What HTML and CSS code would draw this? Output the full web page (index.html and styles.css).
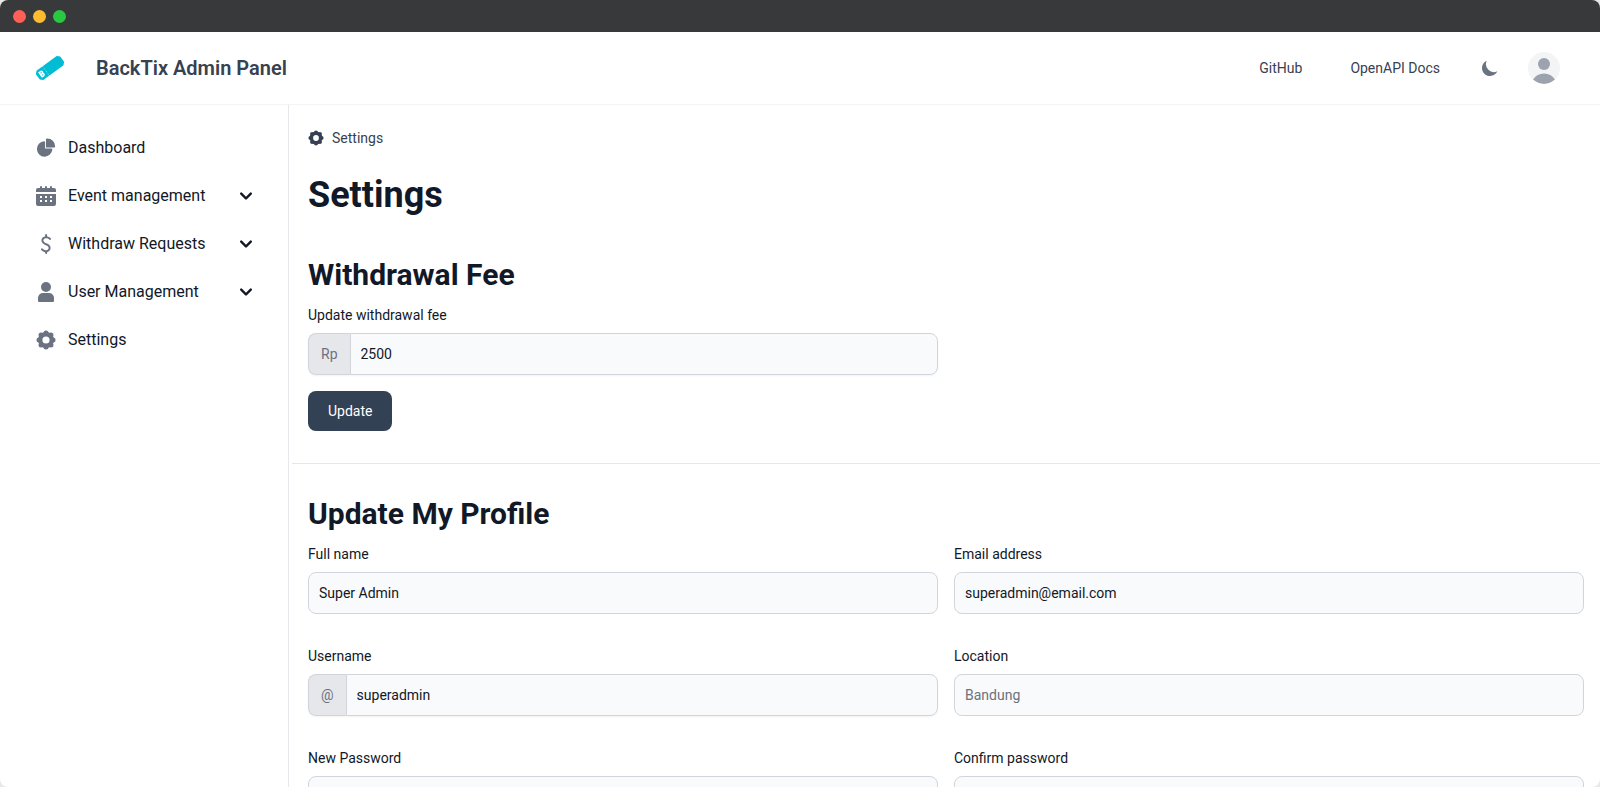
FILE: index.html
```html
<!DOCTYPE html>
<html lang="en">
<head>
<meta charset="utf-8">
<meta name="viewport" content="width=device-width, initial-scale=1">
<title>BackTix Admin Panel</title>
<link rel="stylesheet" href="styles.css">
</head>
<body>
<svg class="defs" aria-hidden="true">
  <symbol id="cog" viewBox="0 0 20 20">
    <circle cx="10" cy="10" r="5.800" fill="none" stroke="currentColor" stroke-width="4.400"/>
    <path fill="none" stroke="currentColor" stroke-width="5" stroke-linecap="round" d="M10 3h0M10 17h0M3 10h0M17 10h0M5.050 5.050h0M14.950 5.050h0M5.050 14.950h0M14.950 14.950h0"/>
  </symbol>
  <symbol id="chevron" viewBox="0 0 20 20"><path fill-rule="evenodd" d="M5.293 7.293a1 1 0 0 1 1.414 0L10 10.586l3.293-3.293a1 1 0 1 1 1.414 1.414l-4 4a1 1 0 0 1-1.414 0l-4-4a1 1 0 0 1 0-1.414z"/></symbol>
</svg>
<div class="window">
  <div class="titlebar">
    <span class="dot dot-red"></span>
    <span class="dot dot-yellow"></span>
    <span class="dot dot-green"></span>
  </div>

  <header class="topbar">
    <a class="brand" href="#">
      <svg class="logo" viewBox="0 0 28 24" aria-hidden="true">
        <g transform="rotate(-36 14 12)">
          <path fill="#00bcd4" d="M1.500 6.200h25l2.500 2.500v6.600l-2.500 2.500h-25L-1 15.300V8.700z"/>
          <path d="M9 6.200v11.600" stroke="#fff" stroke-width=".6" stroke-dasharray="1 1" fill="none" opacity=".8"/>
          <path d="M2.500 9.500v5h2a1.300 1.300 0 0 0 0-2.500h-2 1.800a1.200 1.200 0 0 0 0-2.500z" fill="none" stroke="#fff" stroke-width="1.500"/>
        </g>
      </svg>
      <span class="brand-name">BackTix Admin Panel</span>
    </a>
    <nav class="toplinks" aria-label="Resources">
      <a href="#">GitHub</a>
      <a href="#">OpenAPI Docs</a>
    </nav>
    <button class="icon-button theme" type="button" aria-label="Toggle dark mode">
      <svg viewBox="0 0 20 20"><path d="M17.293 13.293A8 8 0 0 1 6.707 2.707a8.001 8.001 0 1 0 10.586 10.586z"/></svg>
    </button>
    <button class="icon-button avatar" type="button" aria-label="Account">
      <svg viewBox="0 0 32 32"><circle cx="16" cy="12" r="6"/><path d="M5 27.500a13 13 0 0 1 22 0A16 16 0 0 1 5 27.500z"/></svg>
    </button>
  </header>

  <div class="body">
    <nav class="sidebar" aria-label="Main">
      <a class="item" href="#">
        <svg class="item-icon" viewBox="0 0 22 21"><path d="M16.975 11H10V4.025a1 1 0 0 0-1.066-.998 8.500 8.500 0 1 0 9.039 9.039.999.999 0 0 0-1-1.066h.002Z"/><path d="M12.500 0c-.157 0-.311.010-.565.027A1 1 0 0 0 11 1.020V10h8.975a1 1 0 0 0 1-.935c.013-.188.028-.374.028-.565A8.510 8.510 0 0 0 12.500 0Z"/></svg>
        <span>Dashboard</span>
      </a>
      <button class="item" type="button">
        <svg class="item-icon" viewBox="0 0 20 20"><path d="M18 2h-2V1a1 1 0 0 0-2 0v1h-3V1a1 1 0 0 0-2 0v1H6V1a1 1 0 0 0-2 0v1H2a2 2 0 0 0-2 2v2h20V4a2 2 0 0 0-2-2Z"/><path fill-rule="evenodd" d="M0 18a2 2 0 0 0 2 2h16a2 2 0 0 0 2-2V8H0v10ZM4 10h2v2H4zm5 0h2v2H9zm5 0h2v2h-2zM4 14h2v2H4zm5 0h2v2H9zm5 0h2v2h-2z"/></svg>
        <span>Event management</span>
        <svg class="chevron"><use href="#chevron"/></svg>
      </button>
      <button class="item" type="button">
        <svg class="item-icon item-icon-line" viewBox="2 2 20 20"><path d="M8 17.345a4.760 4.760 0 0 0 2.558 1.618c2.274.589 4.512-.446 4.999-2.310.487-1.866-1.273-3.900-3.546-4.490-2.273-.590-4.034-2.623-3.547-4.488.486-1.865 2.724-2.899 4.998-2.310.982.236 1.870.793 2.538 1.592m-3.879 12.171V21m0-18v2.200"/></svg>
        <span>Withdraw Requests</span>
        <svg class="chevron"><use href="#chevron"/></svg>
      </button>
      <button class="item" type="button">
        <svg class="item-icon" viewBox="0 0 20 20"><circle cx="10" cy="5" r="5"/><path d="M7 11h6a5 5 0 0 1 5 5v3a1 1 0 0 1-1 1H3a1 1 0 0 1-1-1v-3a5 5 0 0 1 5-5z"/></svg>
        <span>User Management</span>
        <svg class="chevron"><use href="#chevron"/></svg>
      </button>
      <a class="item" href="#">
        <svg class="item-icon"><use href="#cog"/></svg>
        <span>Settings</span>
      </a>
    </nav>

    <main class="content">
      <section class="section intro">
        <nav class="breadcrumb" aria-label="Breadcrumb">
          <svg><use href="#cog"/></svg>
          <a href="#">Settings</a>
        </nav>
        <h1>Settings</h1>
        <form class="form">
          <h2>Withdrawal Fee</h2>
          <div class="grid">
            <div class="field">
              <label for="fee">Update withdrawal fee</label>
              <div class="group">
                <span class="addon">Rp</span>
                <input id="fee" type="text" value="2500">
              </div>
            </div>
          </div>
          <button class="primary" type="button">Update</button>
        </form>
      </section>

      <section class="section">
        <form class="form">
          <h2>Update My Profile</h2>
          <div class="grid">
            <div class="field">
              <label for="name">Full name</label>
              <input id="name" type="text" value="Super Admin">
            </div>
            <div class="field">
              <label for="email">Email address</label>
              <input id="email" type="email" value="superadmin@email.com">
            </div>
            <div class="field">
              <label for="username">Username</label>
              <div class="group">
                <span class="addon">@</span>
                <input id="username" type="text" value="superadmin">
              </div>
            </div>
            <div class="field">
              <label for="location">Location</label>
              <input id="location" type="text" placeholder="Bandung">
            </div>
            <div class="field">
              <label for="password">New Password</label>
              <input id="password" type="password">
            </div>
            <div class="field">
              <label for="confirm">Confirm password</label>
              <input id="confirm" type="password">
            </div>
          </div>
        </form>
      </section>
    </main>
  </div>
</div>
</body>
</html>
```
FILE: styles.css
```css
*, *::before, *::after {
  box-sizing: border-box;
}

body {
  margin: 0;
  background: #e8e8e8;
  color: #111827;
  font-family: Roboto, "Liberation Sans", sans-serif;
  font-size: 14px;
  line-height: 20px;
}

a {
  color: inherit;
  text-decoration: none;
}

button,
input {
  font: inherit;
  color: inherit;
}

button {
  border: 0;
  background: none;
  cursor: pointer;
}

svg {
  fill: currentColor;
}

.defs {
  position: absolute;
  width: 0;
  height: 0;
}

.window {
  display: flex;
  flex-direction: column;
  height: 100vh;
  overflow: hidden;
  border-radius: 8px;
  background: #fff;
}

.titlebar {
  display: flex;
  flex: none;
  align-items: center;
  gap: 7px;
  height: 32px;
  padding: 1px 13px 0;
  background: #38393a;
}

.dot {
  width: 13px;
  height: 13px;
  border-radius: 50%;
}

.dot-red { background: #ff5f57; }
.dot-yellow { background: #febc2e; }
.dot-green { background: #28c840; }

.topbar {
  display: flex;
  flex: none;
  align-items: center;
  height: 73px;
  padding: 0 40px 0 36px;
  border-bottom: 1px solid #f3f4f6;
  color: #374151;
}

.brand {
  display: flex;
  flex: 1;
  align-items: center;
  gap: 32px;
}

.logo {
  width: 28px;
  height: 24px;
  overflow: visible;
}

.brand-name {
  font-size: 20px;
  font-weight: 600;
  line-height: 28px;
}

.toplinks {
  display: flex;
  gap: 48px;
}

.icon-button {
  display: flex;
  padding: 0;
}

.theme {
  margin: 0 28px 0 40px;
  color: #6b7280;
}

.theme svg {
  width: 20px;
  height: 20px;
}

.avatar {
  overflow: hidden;
  border-radius: 50%;
  background: #f3f4f6;
  color: #9ca3af;
}

.avatar svg {
  width: 32px;
  height: 32px;
}

.body {
  display: flex;
  flex: 1;
  min-height: 0;
}

.sidebar {
  display: flex;
  flex: none;
  flex-direction: column;
  gap: 8px;
  width: 289px;
  padding: 23px 24px 16px;
  border-right: 1px solid #e5e7eb;
}

.item {
  display: flex;
  align-items: center;
  gap: 12px;
  height: 40px;
  padding: 0 12px;
  font-size: 16px;
  line-height: 24px;
  text-align: left;
}

.item span {
  flex: 1;
}

.item-icon {
  width: 20px;
  height: 20px;
  color: #6b7280;
}

.item-icon-line {
  fill: none;
  stroke: currentColor;
  stroke-width: 2;
  stroke-linecap: round;
  stroke-linejoin: round;
}

.chevron {
  width: 24px;
  height: 24px;
  margin-right: -6px;
}

.content {
  flex: 1;
  min-width: 0;
  margin-left: 3px;
  overflow: hidden;
}

.section {
  padding: 32px 16px;
}

.section + .section {
  border-top: 1px solid #e5e7eb;
}

.intro {
  padding-top: 23px;
}

.breadcrumb {
  display: flex;
  align-items: center;
  gap: 8px;
  color: #374151;
}

.breadcrumb svg {
  width: 16px;
  height: 16px;
}

h1,
h2 {
  margin: 0;
  font-weight: 700;
}

h1 {
  margin-top: 25px;
  font-size: 36px;
  line-height: 44px;
}

h2 {
  margin-bottom: 12px;
  font-size: 30px;
  line-height: 36px;
}

.intro .form {
  margin-top: 40px;
}

.grid {
  display: grid;
  grid-template-columns: 1fr 1fr;
  gap: 32px 16px;
}

.field {
  display: flex;
  flex-direction: column;
  gap: 8px;
}

.field input {
  width: 100%;
  height: 42px;
  padding: 0 10px;
  border: 1px solid #d1d5db;
  border-radius: 8px;
  background: #f9fafb;
}

.field input::placeholder {
  color: #6b7280;
  opacity: 1;
}

.group {
  display: flex;
  border-radius: 8px;
  box-shadow: 0 1px 2px rgba(0, 0, 0, 0.05);
}

.addon {
  display: flex;
  align-items: center;
  padding: 0 12px;
  border: 1px solid #d1d5db;
  border-right: 0;
  border-radius: 8px 0 0 8px;
  background: #e5e7eb;
  color: #6b7280;
}

.group input {
  flex: 1;
  min-width: 0;
  border-radius: 0 8px 8px 0;
}

.primary {
  height: 40px;
  margin-top: 16px;
  padding: 0 20px;
  border-radius: 8px;
  background: #334155;
  color: #fff;
}
```
